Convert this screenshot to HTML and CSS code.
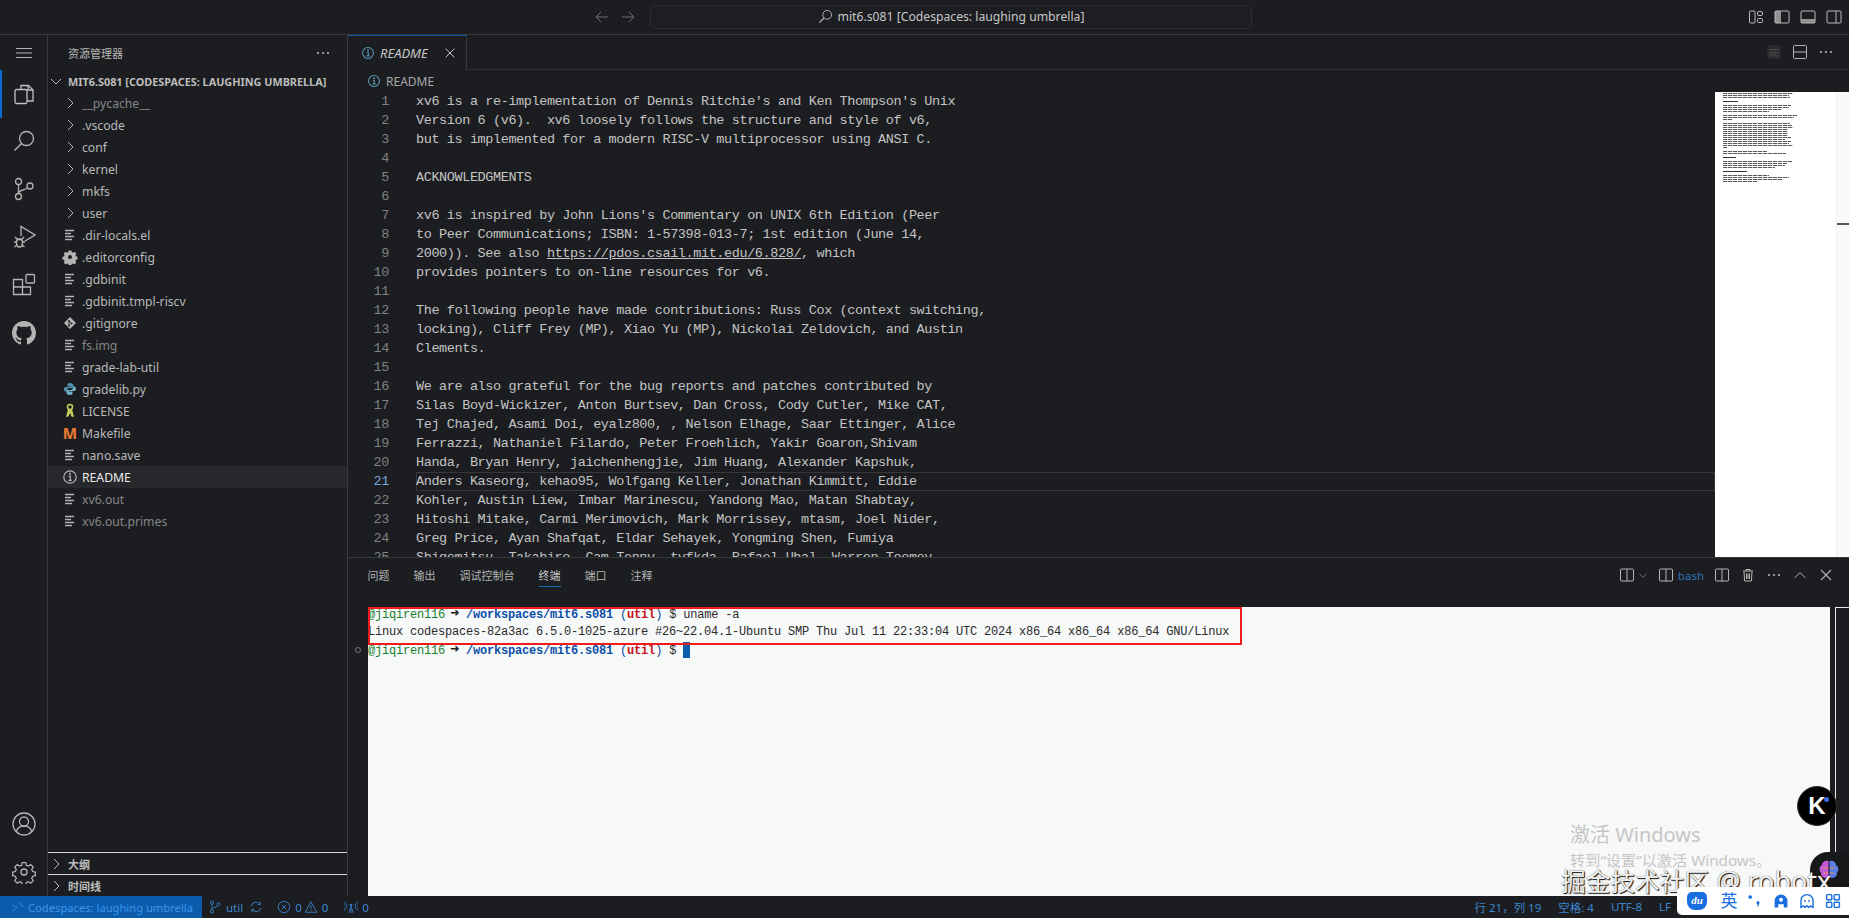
FILE: index.html
```html
<!DOCTYPE html>
<html lang="zh-CN">
<head>
<meta charset="utf-8">
<title>mit6.s081 [Codespaces: laughing umbrella]</title>
<link rel="stylesheet" href="styles.css">
</head>
<body>
<svg class="defs" width="0" height="0" aria-hidden="true">
  <symbol id="chev-r" viewBox="0 0 16 16"><path d="M6 3l5 5-5 5" fill="none" stroke="currentColor" stroke-width="1"/></symbol>
  <symbol id="chev-d" viewBox="0 0 16 16"><path d="M3 6l5 5 5-5" fill="none" stroke="currentColor" stroke-width="1"/></symbol>
  <symbol id="lines" viewBox="0 0 16 16"><path d="M3 3.5h9M3 6.5h6M3 9.5h9M3 12.5h7" fill="none" stroke="currentColor" stroke-width="1.3"/></symbol>
  <symbol id="info" viewBox="0 0 16 16"><circle cx="8" cy="8" r="6.2" fill="none" stroke="currentColor" stroke-width="1.2"/><path d="M6.6 7.2h1.7v4M6.4 11.3h3.4" fill="none" stroke="currentColor" stroke-width="1.2"/><circle cx="8" cy="4.8" r="1" fill="currentColor"/></symbol>
  <symbol id="split" viewBox="0 0 16 16"><rect x="1.5" y="2" width="13" height="12" rx="1" fill="none" stroke="currentColor"/><path d="M8 2v12" stroke="currentColor"/></symbol>
  <symbol id="dots" viewBox="0 0 16 16"><circle cx="3" cy="8" r="1.1" fill="currentColor"/><circle cx="8" cy="8" r="1.1" fill="currentColor"/><circle cx="13" cy="8" r="1.1" fill="currentColor"/></symbol>
  <symbol id="close" viewBox="0 0 16 16"><path d="M3 3l10 10M13 3L3 13" fill="none" stroke="currentColor" stroke-width="1.1"/></symbol>
</svg>

<header class="titlebar">
  <svg class="nav-ico" viewBox="0 0 16 16"><path d="M14 8H2.5M7 3L2 8l5 5" fill="none" stroke="currentColor"/></svg>
  <svg class="nav-ico nav-next" viewBox="0 0 16 16"><path d="M2 8h11.5M9 3l5 5-5 5" fill="none" stroke="currentColor"/></svg>
  <div class="command">
    <svg class="command-ico" viewBox="0 0 16 16"><circle cx="9.8" cy="6.2" r="4.7" fill="none" stroke="currentColor"/><path d="M6.4 9.6L1.5 14.5" stroke="currentColor" stroke-width="1.2"/></svg>
    <span>mit6.s081 [Codespaces: laughing umbrella]</span>
  </div>
  <div class="layout-icons">
    <svg viewBox="0 0 16 16"><rect x="1.5" y="2" width="5.5" height="12" rx="1" fill="none" stroke="currentColor"/><rect x="9.5" y="2.5" width="5" height="4" rx="1.5" fill="none" stroke="currentColor"/><rect x="9.5" y="9.5" width="5" height="4" rx="1.2" fill="none" stroke="currentColor"/></svg>
    <svg viewBox="0 0 16 16"><rect x="1" y="2" width="14" height="12" rx="1" fill="none" stroke="currentColor"/><rect x="1" y="2" width="6" height="12" fill="currentColor" opacity=".75"/></svg>
    <svg viewBox="0 0 16 16"><rect x="1" y="2" width="14" height="12" rx="1" fill="none" stroke="currentColor"/><rect x="1" y="10" width="14" height="4" fill="currentColor" opacity=".75"/></svg>
    <svg viewBox="0 0 16 16"><rect x="1" y="2" width="14" height="12" rx="1" fill="none" stroke="currentColor"/><path d="M10 2v12" stroke="currentColor"/></svg>
  </div>
</header>

<div class="workbench">
  <nav class="activity">
    <svg class="act menu" viewBox="0 0 16 16"><path d="M0 3.5h16M0 8h16M0 12.500h16" fill="none" stroke="currentColor" stroke-width=".9"/></svg>
    <div class="act-active">
      <svg class="act" viewBox="0 0 24 24"><path d="M9 7V3.500h7.500L21 8v11h-6" fill="none" stroke="currentColor" stroke-width="1.300"/><path d="M16 3.500V8h5" fill="none" stroke="currentColor" stroke-width="1.300"/><rect x="3" y="7.500" width="12" height="14" rx="1.500" fill="none" stroke="currentColor" stroke-width="1.300"/></svg>
    </div>
    <svg class="act" viewBox="0 0 24 24"><circle cx="14.500" cy="9.500" r="7" fill="none" stroke="currentColor" stroke-width="1.300"/><path d="M9.500 14.500L2.500 21.500" stroke="currentColor" stroke-width="1.500"/></svg>
    <svg class="act" viewBox="0 0 24 24"><circle cx="6.500" cy="4.500" r="3" fill="none" stroke="currentColor" stroke-width="1.300"/><circle cx="6.500" cy="19.500" r="3" fill="none" stroke="currentColor" stroke-width="1.300"/><circle cx="18" cy="9" r="3" fill="none" stroke="currentColor" stroke-width="1.300"/><path d="M6.500 7.500v9M7 16c0-4 8-2.500 8.500-5.500" fill="none" stroke="currentColor" stroke-width="1.300"/></svg>
    <svg class="act" viewBox="0 0 24 24"><path d="M9 11V1.500L23 10l-10 6" fill="none" stroke="currentColor" stroke-width="1.300"/><path d="M3 12l2.500 2.500h4L12 12M2 17h3M10 17h3M2.500 22l3-2.500M12.500 22l-3-2.500" fill="none" stroke="currentColor" stroke-width="1.300"/><rect x="4.500" y="14" width="6" height="8" rx="3" fill="none" stroke="currentColor" stroke-width="1.300"/></svg>
    <svg class="act" viewBox="0 0 24 24"><path d="M1.500 6.500h9v15h-9zM1.500 14h17v7.500h-8" fill="none" stroke="currentColor" stroke-width="1.300"/><rect x="14" y="1.500" width="8.500" height="8.500" rx="1" fill="none" stroke="currentColor" stroke-width="1.300"/></svg>
    <svg class="act act-gh" viewBox="0 0 16 16"><path fill="currentColor" d="M8 0C3.580 0 0 3.580 0 8c0 3.540 2.290 6.530 5.470 7.590.4.070.55-.17.55-.38 0-.19-.01-.82-.01-1.490-2.010.370-2.530-.49-2.690-.94-.09-.23-.48-.94-.82-1.130-.28-.15-.68-.52-.01-.53.630-.01 1.080.58 1.230.82.720 1.210 1.870.87 2.330.66.070-.52.280-.87.510-1.070-1.780-.2-3.640-.89-3.640-3.950 0-.87.310-1.590.820-2.150-.08-.2-.36-1.020.08-2.120 0 0 .67-.21 2.200.82.640-.18 1.320-.27 2-.27s1.360.09 2 .27c1.530-1.040 2.200-.82 2.200-.82.440 1.100.160 1.920.080 2.120.51.560.82 1.270.82 2.150 0 3.070-1.870 3.750-3.650 3.950.29.25.54.73.54 1.480 0 1.070-.01 1.930-.01 2.200 0 .21.150.46.550.38A8.010 8.010 0 0 0 16 8c0-4.420-3.580-8-8-8z"/></svg>
    <div class="activity-spacer"></div>
    <svg class="act" viewBox="0 0 24 24"><circle cx="12" cy="12" r="11" fill="none" stroke="currentColor" stroke-width="1.300"/><circle cx="12" cy="9.500" r="4.500" fill="none" stroke="currentColor" stroke-width="1.300"/><path d="M4.500 20c.5-4 3.500-6 7.500-6s7 2 7.500 6" fill="none" stroke="currentColor" stroke-width="1.300"/></svg>
    <svg class="act act-gear" viewBox="0 0 24 24"><path d="M10 1.500h4l.6 3 2.300 1 2.600-1.700 2.800 2.800-1.700 2.600 1 2.300 3 .6v4l-3 .6-1 2.300 1.700 2.600-2.800 2.800-2.600-1.700-2.300 1-.6 3h-4l-.6-3-2.300-1-2.600 1.700-2.800-2.800 1.700-2.600-1-2.300-3-.6v-4l3-.6 1-2.300-1.700-2.600 2.800-2.800 2.600 1.700 2.300-1z" transform="translate(1.200 1.200) scale(.9)" fill="none" stroke="currentColor" stroke-width="1.400"/><circle cx="12" cy="12" r="3" fill="none" stroke="currentColor" stroke-width="1.300"/></svg>
  </nav>

  <aside class="sidebar">
    <div class="side-title"><span>资源管理器</span><svg class="ico16" viewBox="0 0 16 16"><use href="#dots"/></svg></div>
    <div class="root-row"><svg class="ico16" viewBox="0 0 16 16"><use href="#chev-d"/></svg><span>MIT6.S081 [CODESPACES: LAUGHING UMBRELLA]</span></div>
    <ul class="tree">
      <li class="row dim"><svg class="ico-row" viewBox="0 0 16 16"><use href="#chev-r"/></svg><span>__pycache__</span></li>
      <li class="row"><svg class="ico-row" viewBox="0 0 16 16"><use href="#chev-r"/></svg><span>.vscode</span></li>
      <li class="row"><svg class="ico-row" viewBox="0 0 16 16"><use href="#chev-r"/></svg><span>conf</span></li>
      <li class="row"><svg class="ico-row" viewBox="0 0 16 16"><use href="#chev-r"/></svg><span>kernel</span></li>
      <li class="row"><svg class="ico-row" viewBox="0 0 16 16"><use href="#chev-r"/></svg><span>mkfs</span></li>
      <li class="row"><svg class="ico-row" viewBox="0 0 16 16"><use href="#chev-r"/></svg><span>user</span></li>
      <li class="row"><svg class="ico-row" viewBox="0 0 16 16"><use href="#lines"/></svg><span>.dir-locals.el</span></li>
      <li class="row"><svg class="ico-row" viewBox="0 0 16 16"><path fill="#b4b4b4" d="M6.500 1.500h3l.4 1.800 1.500.6 1.600-1 2 2.100-1 1.500.6 1.500 1.800.4v3l-1.800.4-.6 1.500 1 1.500-2 2.100-1.600-1-1.500.6-.4 1.800h-3l-.4-1.800-1.500-.6-1.600 1-2-2.100 1-1.500-.6-1.500-1.800-.4v-3l1.800-.4.6-1.500-1-1.500 2-2.100 1.600 1 1.500-.6z" transform="translate(.8 .2) scale(.9)"/><circle cx="8" cy="8" r="2" fill="#1b1d20"/></svg><span>.editorconfig</span></li>
      <li class="row"><svg class="ico-row" viewBox="0 0 16 16"><use href="#lines"/></svg><span>.gdbinit</span></li>
      <li class="row"><svg class="ico-row" viewBox="0 0 16 16"><use href="#lines"/></svg><span>.gdbinit.tmpl-riscv</span></li>
      <li class="row"><svg class="ico-row" viewBox="0 0 16 16"><path fill="#b4b4b4" d="M8 2l6 6-6 6-6-6z"/><circle cx="7" cy="6" r="1" fill="#1b1d20"/><circle cx="9.500" cy="8.500" r="1" fill="#1b1d20"/><circle cx="7" cy="10.500" r="1" fill="#1b1d20"/><path d="M7 6v4.500M7 6l2.500 2.500" stroke="#1b1d20" stroke-width=".8"/></svg><span>.gitignore</span></li>
      <li class="row dim"><svg class="ico-row" viewBox="0 0 16 16"><use href="#lines"/></svg><span>fs.img</span></li>
      <li class="row"><svg class="ico-row" viewBox="0 0 16 16"><use href="#lines"/></svg><span>grade-lab-util</span></li>
      <li class="row"><svg class="ico-row" viewBox="0 0 16 16"><path fill="#4f93b0" d="M8 2C5.500 2 5.500 3 5.500 4v1.500H9V6H3.800C2.500 6 2 7 2 8.200 2 9.500 2.500 10.500 3.800 10.500H5V9.200C5 8 6 7 7.200 7h3C11 7 11.500 6.500 11.500 5.700V4C11.500 3 10.500 2 8 2z"/><path fill="#6fb0c8" d="M8 14c2.500 0 2.500-1 2.500-2v-1.500H7V10h5.200C13.500 10 14 9 14 7.800 14 6.500 13.500 5.500 12.200 5.500H11v1.300C11 8 10 9 8.800 9h-3C5 9 4.500 9.500 4.500 10.300V12c0 1 1 2 3.500 2z"/></svg><span>gradelib.py</span></li>
      <li class="row"><svg class="ico-row" viewBox="0 0 16 16"><circle cx="8" cy="4" r="2.500" fill="none" stroke="#c3cf5a" stroke-width="1.500"/><path d="M6 6h4l2 8-2.500-.5L8 10l-1.500 3.500L4 14z" fill="#c3cf5a"/></svg><span>LICENSE</span></li>
      <li class="row"><b class="m-ico">M</b><span>Makefile</span></li>
      <li class="row"><svg class="ico-row" viewBox="0 0 16 16"><use href="#lines"/></svg><span>nano.save</span></li>
      <li class="row selected"><svg class="ico-row ico-info" viewBox="0 0 16 16"><use href="#info"/></svg><span>README</span></li>
      <li class="row dim"><svg class="ico-row" viewBox="0 0 16 16"><use href="#lines"/></svg><span>xv6.out</span></li>
      <li class="row dim"><svg class="ico-row" viewBox="0 0 16 16"><use href="#lines"/></svg><span>xv6.out.primes</span></li>
    </ul>
    <div class="side-section"><svg class="ico16" viewBox="0 0 16 16"><use href="#chev-r"/></svg><span>大纲</span></div>
    <div class="side-section"><svg class="ico16" viewBox="0 0 16 16"><use href="#chev-r"/></svg><span>时间线</span></div>
  </aside>

  <main class="content">
    <section class="editor">
      <div class="tabs">
        <div class="tab"><svg class="ico14 ico-info" viewBox="0 0 16 16"><use href="#info"/></svg><i>README</i><svg class="ico16 tab-x" viewBox="0 0 16 16"><use href="#close"/></svg></div>
        <div class="tabs-fill">
          <svg class="ico18 faded" viewBox="0 0 16 16"><rect x="1" y="1" width="14" height="14" fill="#2a2c2f"/><path d="M2.500 5.500h11M8 5.500v2M4 8h3v4H4zM9 8h3v4H9z" fill="none" stroke="#555" /></svg>
          <svg class="ico16" viewBox="0 0 16 16"><rect x="1.500" y="1.500" width="13" height="13" rx="1" fill="none" stroke="currentColor"/><path d="M1.500 8h13" stroke="currentColor"/></svg>
          <svg class="ico16" viewBox="0 0 16 16"><use href="#dots"/></svg>
        </div>
      </div>
      <div class="crumbs"><svg class="ico14 ico-info" viewBox="0 0 16 16"><use href="#info"/></svg><span>README</span></div>
      <div class="editor-body">
        <div class="code">
          <div class="line"><span class="ln">1</span><span class="tx">xv6 is a re-implementation of Dennis Ritchie's and Ken Thompson's Unix</span></div>
          <div class="line"><span class="ln">2</span><span class="tx">Version 6 (v6).  xv6 loosely follows the structure and style of v6,</span></div>
          <div class="line"><span class="ln">3</span><span class="tx">but is implemented for a modern RISC-V multiprocessor using ANSI C.</span></div>
          <div class="line"><span class="ln">4</span><span class="tx"></span></div>
          <div class="line"><span class="ln">5</span><span class="tx">ACKNOWLEDGMENTS</span></div>
          <div class="line"><span class="ln">6</span><span class="tx"></span></div>
          <div class="line"><span class="ln">7</span><span class="tx">xv6 is inspired by John Lions's Commentary on UNIX 6th Edition (Peer</span></div>
          <div class="line"><span class="ln">8</span><span class="tx">to Peer Communications; ISBN: 1-57398-013-7; 1st edition (June 14,</span></div>
          <div class="line"><span class="ln">9</span><span class="tx">2000)). See also <u>https://pdos.csail.mit.edu/6.828/</u>, which</span></div>
          <div class="line"><span class="ln">10</span><span class="tx">provides pointers to on-line resources for v6.</span></div>
          <div class="line"><span class="ln">11</span><span class="tx"></span></div>
          <div class="line"><span class="ln">12</span><span class="tx">The following people have made contributions: Russ Cox (context switching,</span></div>
          <div class="line"><span class="ln">13</span><span class="tx">locking), Cliff Frey (MP), Xiao Yu (MP), Nickolai Zeldovich, and Austin</span></div>
          <div class="line"><span class="ln">14</span><span class="tx">Clements.</span></div>
          <div class="line"><span class="ln">15</span><span class="tx"></span></div>
          <div class="line"><span class="ln">16</span><span class="tx">We are also grateful for the bug reports and patches contributed by</span></div>
          <div class="line"><span class="ln">17</span><span class="tx">Silas Boyd-Wickizer, Anton Burtsev, Dan Cross, Cody Cutler, Mike CAT,</span></div>
          <div class="line"><span class="ln">18</span><span class="tx">Tej Chajed, Asami Doi, eyalz800, , Nelson Elhage, Saar Ettinger, Alice</span></div>
          <div class="line"><span class="ln">19</span><span class="tx">Ferrazzi, Nathaniel Filardo, Peter Froehlich, Yakir Goaron,Shivam</span></div>
          <div class="line"><span class="ln">20</span><span class="tx">Handa, Bryan Henry, jaichenhengjie, Jim Huang, Alexander Kapshuk,</span></div>
          <div class="line current"><span class="ln">21</span><span class="tx">Anders Kaseorg, kehao95, Wolfgang Keller, Jonathan Kimmitt, Eddie</span></div>
          <div class="line"><span class="ln">22</span><span class="tx">Kohler, Austin Liew, Imbar Marinescu, Yandong Mao, Matan Shabtay,</span></div>
          <div class="line"><span class="ln">23</span><span class="tx">Hitoshi Mitake, Carmi Merimovich, Mark Morrissey, mtasm, Joel Nider,</span></div>
          <div class="line"><span class="ln">24</span><span class="tx">Greg Price, Ayan Shafqat, Eldar Sehayek, Yongming Shen, Fumiya</span></div>
          <div class="line"><span class="ln">25</span><span class="tx">Shigemitsu, Takahiro, Cam Tenny, tyfkda, Rafael Ubal, Warren Toomey,</span></div>
        </div>
        <div class="minimap">
          <div class="mm" style="width:70px"></div><div class="mm" style="width:66px"></div><div class="mm" style="width:67px"></div><div class="mm" style="width:0"></div>
          <div class="mm mm-b" style="width:15px"></div><div class="mm" style="width:0"></div>
          <div class="mm" style="width:68px"></div><div class="mm" style="width:66px"></div><div class="mm" style="width:58px"></div><div class="mm" style="width:46px"></div><div class="mm" style="width:0"></div>
          <div class="mm" style="width:74px"></div><div class="mm" style="width:71px"></div><div class="mm" style="width:9px"></div><div class="mm" style="width:0"></div>
          <div class="mm" style="width:67px"></div><div class="mm" style="width:69px"></div><div class="mm" style="width:70px"></div><div class="mm" style="width:65px"></div><div class="mm" style="width:65px"></div><div class="mm" style="width:65px"></div><div class="mm" style="width:65px"></div><div class="mm" style="width:68px"></div><div class="mm" style="width:62px"></div><div class="mm" style="width:68px"></div><div class="mm" style="width:66px"></div><div class="mm" style="width:70px"></div><div class="mm" style="width:4px"></div><div class="mm" style="width:0"></div>
          <div class="mm" style="width:44px"></div><div class="mm" style="width:63px"></div><div class="mm" style="width:0"></div>
          <div class="mm mm-b" style="width:13px"></div><div class="mm" style="width:0"></div>
          <div class="mm" style="width:69px"></div><div class="mm" style="width:64px"></div><div class="mm" style="width:62px"></div><div class="mm" style="width:52px"></div><div class="mm" style="width:0"></div>
          <div class="mm mm-b" style="width:24px"></div><div class="mm" style="width:0"></div>
          <div class="mm" style="width:46px"></div><div class="mm" style="width:66px"></div><div class="mm" style="width:60px"></div><div class="mm" style="width:35px"></div>
        </div>
        <div class="scroll"><div class="scroll-mark"></div></div>
      </div>
    </section>

    <section class="panel">
      <div class="panel-head">
        <span class="ptab">问题</span><span class="ptab">输出</span><span class="ptab">调试控制台</span><span class="ptab ptab-on">终端</span><span class="ptab">端口</span><span class="ptab">注释</span>
        <div class="panel-actions">
          <svg class="ico16" viewBox="0 0 16 16"><use href="#split"/></svg>
          <svg class="ico12 chev-small" viewBox="0 0 16 16"><use href="#chev-d"/></svg>
          <svg class="ico16 bash-ico" viewBox="0 0 16 16"><use href="#split"/></svg>
          <span class="bash">bash</span>
          <svg class="ico16" viewBox="0 0 16 16"><use href="#split"/></svg>
          <svg class="ico16" viewBox="0 0 16 16"><path d="M3 4h10M6 4V2.500h4V4M4 4.500l.6 9.500h6.800l.6-9.500M6.500 6.500v5.500M8 6.500v5.500M9.500 6.500v5.500" fill="none" stroke="currentColor"/></svg>
          <svg class="ico16" viewBox="0 0 16 16"><use href="#dots"/></svg>
          <svg class="ico16" viewBox="0 0 16 16"><path d="M2.500 11L8 5.500l5.500 5.500" fill="none" stroke="currentColor"/></svg>
          <svg class="ico16" viewBox="0 0 16 16"><use href="#close"/></svg>
        </div>
      </div>
      <div class="term-wrap">
        <div class="term-gutter"><span class="term-dot"></span></div>
        <div class="terminal">
          <div class="tline"><span class="g">@jiqiren116</span> <b class="arrow">➜</b> <span class="p">/workspaces/mit6.s081</span> <span class="b">(</span><span class="r">util</span><span class="b">)</span> $ uname -a</div>
          <div class="tline">Linux codespaces-82a3ac 6.5.0-1025-azure #26~22.04.1-Ubuntu SMP Thu Jul 11 22:33:04 UTC 2024 x86_64 x86_64 x86_64 GNU/Linux</div>
          <div class="tline"><span class="g">@jiqiren116</span> <b class="arrow">➜</b> <span class="p">/workspaces/mit6.s081</span> <span class="b">(</span><span class="r">util</span><span class="b">)</span> $ <span class="cursor"></span></div>
          <div class="redbox"></div>
          <div class="activate"><p class="a1">激活 Windows</p><p class="a2">转到“设置”以激活 Windows。</p></div>
        </div>
        <div class="term-side"></div>
      </div>
    </section>
  </main>
</div>

<footer class="status">
  <div class="remote"><svg class="ico14" viewBox="0 0 16 16"><path d="M2 13l6-6M2 5l3 3M9 3l5 5" fill="none" stroke="currentColor"/></svg><span>Codespaces: laughing umbrella</span></div>
  <div class="st branch"><svg class="ico14" viewBox="0 0 16 16"><circle cx="4.500" cy="3" r="1.800" fill="none" stroke="currentColor"/><circle cx="4.500" cy="13" r="1.800" fill="none" stroke="currentColor"/><circle cx="12" cy="5" r="1.800" fill="none" stroke="currentColor"/><path d="M4.500 5v6M5 10c1-2 5-1 6-3.500" fill="none" stroke="currentColor"/></svg><span>util</span><svg class="ico14 sync" viewBox="0 0 16 16"><path d="M2.500 7a5.500 5.500 0 0 1 10-2M13.500 9a5.500 5.500 0 0 1-10 2M12.800 2v3.200H9.800M3.200 14v-3.200h3" fill="none" stroke="currentColor"/></svg></div>
  <div class="st problems"><svg class="ico14" viewBox="0 0 16 16"><circle cx="8" cy="8" r="6.500" fill="none" stroke="currentColor"/><path d="M5.500 5.500l5 5M10.500 5.500l-5 5" stroke="currentColor"/></svg><span>0</span><svg class="ico14 warn" viewBox="0 0 16 16"><path d="M8 2l6.500 12h-13zM8 6v4M8 11v1.500" fill="none" stroke="currentColor"/></svg><span>0</span></div>
  <div class="st ports"><svg class="ico14" viewBox="0 0 16 16"><path d="M8 8v7M5 15l3-7 3 7M3.500 10a5 5 0 0 1 0-6M12.500 10a5 5 0 0 0 0-6M1.500 12a8 8 0 0 1 0-10M14.500 12a8 8 0 0 0 0-10" fill="none" stroke="currentColor"/><circle cx="8" cy="6" r="1.500" fill="currentColor"/></svg><span>0</span></div>
  <div class="st-right"><span>行 21，列 19</span><span>空格: 4</span><span>UTF-8</span><span>LF</span></div>
</footer>

<div class="k-badge"><b>K</b><i></i></div>
<div class="brain-badge"><svg viewBox="0 0 24 24"><path d="M11.500 3C8 2 5 4 5 7 2 8.500 2 13 4 14.500 3.500 18 7 21 11.500 20z" fill="#c45ad8"/><path d="M12.500 3C16 2 19 4 19 7c3 1.500 3 6 1 7.500.5 3.500-3 6.500-7.500 5.500z" fill="#5a7ce8"/><path d="M6 10h5M13 10h5M7 15h4M13 15h4" stroke="#f0904a" stroke-width="1.200"/></svg></div>
<div class="watermark">掘金技术社区<span class="wm-lat"> @ robotx</span></div>
<div class="ime">
  <span class="ime-du">du</span>
  <span class="ime-en">英</span>
  <svg class="ime-ico" viewBox="0 0 20 20"><circle cx="4" cy="5" r="2.300" fill="currentColor"/><path d="M13 10a2.600 2.600 0 0 1 2.500 3c-.2 2-1.500 3.500-3.500 4 1-1.200 1.200-2 1-2.800A2.600 2.600 0 0 1 13 10z" fill="currentColor"/></svg>
  <svg class="ime-ico" viewBox="0 0 20 20"><path d="M2 18V10a8 8 0 0 1 16 0v8h-4.500v-4h-7v4z" fill="currentColor"/><circle cx="10" cy="8.500" r="2.500" fill="#fff"/></svg>
  <svg class="ime-ico" viewBox="0 0 20 20"><path d="M2.500 18V9.500a7.500 7.500 0 0 1 15 0V18l-3.200-2-2 2-2.300-2-2.300 2-2-2z" fill="none" stroke="currentColor" stroke-width="1.800"/><circle cx="7.500" cy="10" r="1.200" fill="currentColor"/><circle cx="12.500" cy="10" r="1.200" fill="currentColor"/></svg>
  <svg class="ime-ico" viewBox="0 0 20 20"><g fill="none" stroke="currentColor" stroke-width="1.800"><rect x="2" y="2" width="6.500" height="6.500" rx="1"/><rect x="11.500" y="2" width="6.500" height="6.500" rx="1"/><rect x="2" y="11.500" width="6.500" height="6.500" rx="1"/><rect x="11.500" y="11.500" width="6.500" height="6.500" rx="1"/></g></svg>
</div>
</body>
</html>
```

FILE: styles.css
```css
* { box-sizing: border-box; }
html, body { margin: 0; height: 100%; }
body {
  width: 1849px;
  height: 918px;
  overflow: hidden;
  display: flex;
  flex-direction: column;
  position: relative;
  background: #1b1d20;
  color: #c4c4c4;
  font-family: "Noto Sans", "Noto Sans CJK SC", sans-serif;
  font-size: 12.2px;
}
.defs { position: absolute; }
svg { display: block; flex: none; }
.ico12 { width: 12px; height: 12px; }
.ico14 { width: 14px; height: 14px; }
.ico16 { width: 16px; height: 16px; }
.ico18 { width: 16px; height: 16px; }
.faded { opacity: .8; }
.ico-info { color: #5b9ab5; }

/* title bar */
.titlebar {
  height: 35px;
  flex: none;
  display: flex;
  align-items: center;
  padding: 0 7px 1px 594px;
  border-bottom: 1px solid #383a3d;
}
.nav-ico { width: 16px; height: 16px; color: #6e7073; margin-right: 10px; }
.nav-next { margin-right: 14px; }
.command {
  width: 602px;
  height: 24px;
  border: 1px solid #2c2e31;
  border-radius: 6px;
  background: #1c1e21;
  display: flex;
  align-items: center;
  justify-content: center;
  gap: 5px;
  font-size: 12.2px;
  color: #c8c8c8;
}
.command-ico { width: 15px; height: 15px; color: #b8b8b8; }
.layout-icons { margin-left: auto; display: flex; gap: 10px; color: #b9b9b9; }
.layout-icons svg { width: 16px; height: 16px; }

/* workbench */
.workbench { flex: 1; min-height: 0; display: flex; }
.activity {
  width: 48px;
  flex: none;
  display: flex;
  flex-direction: column;
  align-items: center;
  color: #b4b4b4;
  padding: 10px 0 12px;
  border-right: 1px solid #383a3d;
}
.act { width: 24px; height: 24px; margin-bottom: 24px; }
.menu { width: 16px; height: 16px; margin-bottom: 9px; color: #c4c4c4; }
.act-active {
  width: 47px;
  height: 48px;
  display: flex;
  justify-content: center;
  align-items: center;
  border-left: 2px solid #0a6ad0;
  padding-right: 2px;
  margin-bottom: 11px;
  color: #c0c0c0;
}
.act-active .act { margin: 0; }
.act-gh { margin-bottom: 0; }
.act-gear { margin-bottom: 0; }
.activity-spacer { flex: 1; }

/* side bar */
.sidebar {
  width: 300px;
  flex: none;
  display: flex;
  flex-direction: column;
  border-right: 1px solid #383a3d;
}
.side-title {
  height: 35px;
  flex: none;
  display: flex;
  align-items: center;
  justify-content: space-between;
  padding: 0 16px 0 20px;
  font-size: 11px;
  color: #b8b8b8;
}
.root-row {
  height: 22px;
  flex: none;
  display: flex;
  align-items: center;
  gap: 4px;
  font-size: 10.85px;
  font-weight: 700;
  color: #bdbdbd;
  white-space: nowrap;
}
.tree { list-style: none; margin: 0; padding: 0; flex: 1; }
.row { height: 22px; display: flex; align-items: center; padding-left: 14px; gap: 4px; color: #b9b9b9; }
.ico-row { width: 16px; height: 16px; color: #b4b4b4; }
.dim { color: #868686; }
.selected { background: #26282b; color: #ececec; }
.m-ico { width: 16px; text-align: center; font-size: 15px; font-weight: 800; color: #e37933; line-height: 16px; }
.side-section {
  height: 22px;
  flex: none;
  display: flex;
  align-items: center;
  gap: 4px;
  border-top: 1px solid #d8d8d8;
  font-size: 11px;
  font-weight: 700;
  color: #bdbdbd;
}

/* editor */
.content { flex: 1; min-width: 0; display: flex; flex-direction: column; }
.editor { height: 522px; flex: none; display: flex; flex-direction: column; overflow: hidden; }
.tabs { height: 35px; flex: none; display: flex; }
.tab {
  width: 119px;
  display: flex;
  align-items: center;
  gap: 5px;
  padding-left: 13px;
  border-top: 1px solid #0e5a9e;
  border-right: 1px solid #383a3d;
  color: #c8c8c8;
  font-size: 13px;
}
.tab-x { margin-left: 10px; width: 14px; height: 14px; }
.tabs-fill {
  flex: 1;
  display: flex;
  align-items: center;
  justify-content: flex-end;
  gap: 10px;
  padding-right: 15px;
  border-bottom: 1px solid #2e3033;
  color: #b4b4b4;
}
.crumbs {
  height: 22px;
  flex: none;
  display: flex;
  align-items: center;
  gap: 5px;
  padding-left: 19px;
  font-size: 12px;
  color: #a8a8a8;
}
.editor-body { flex: 1; min-height: 0; display: flex; }
.code {
  flex: 1;
  min-width: 0;
  font-family: "Liberation Mono", monospace;
  font-size: 13.500px;
  letter-spacing: -.4px;
  color: #c4c4c4;
}
.line { height: 19px; line-height: 19px; display: flex; white-space: pre; }
.ln { width: 41px; flex: none; text-align: right; color: #7f8184; }
.tx { flex: 1; margin-left: 27px; }
.current .ln { color: #7aa6dc; }
.current .tx { box-shadow: inset 0 0 0 1px #35373a; }
.minimap { width: 121px; flex: none; background: #fff; }
.mm {
  height: 2px;
  margin-left: 8px;
  border-top: 1px solid transparent;
  background: repeating-linear-gradient(90deg, #5a5a5a 0 4px, #c8c8c8 4px 5px) content-box;
}
.mm-b { background: #333 content-box; }
.scroll { width: 13px; flex: none; background: #fafafa; border-left: 1px solid #eee; padding-top: 131px; }
.scroll-mark { height: 2px; background: #555; }

/* panel */
.panel { flex: 1; min-height: 0; display: flex; flex-direction: column; border-top: 1px solid #38393c; }
.panel-head {
  height: 49px;
  flex: none;
  display: flex;
  align-items: flex-start;
  padding-left: 19.5px;
  font-size: 11px;
  color: #b4b4b4;
}
.ptab { margin-right: 24px; height: 29px; line-height: 36px; white-space: nowrap; }
.ptab-on { color: #c8c8c8; border-bottom: 1px solid #1f6fb8; }
.panel-actions {
  margin-left: auto;
  display: flex;
  align-items: center;
  gap: 10px;
  height: 34px;
  padding-right: 15px;
  color: #b4b4b4;
}
.chev-small { margin-left: -8px; color: #888; }
.bash-ico { margin-left: -1px; margin-right: -6px; }
.bash { color: #2f6fb8; font-size: 11.5px; }
.term-wrap { flex: 1; min-height: 0; display: flex; }
.term-gutter { width: 20px; flex: none; position: relative; }
.term-dot {
  position: absolute;
  left: 7px;
  top: 40px;
  width: 6px;
  height: 6px;
  border: 1px solid #777;
  border-radius: 50%;
}
.terminal {
  width: 1462px;
  flex: none;
  background: #f7f8f8;
  position: relative;
  overflow: hidden;
  font-family: "Liberation Mono", monospace;
  font-size: 12px;
  letter-spacing: -.2px;
  color: #2a2a2a;
  padding-left: 0;
}
.tline { height: 17.300px; line-height: 17.300px; white-space: pre; }
.g { color: #17802c; }
.p { color: #0b4fa8; font-weight: 700; }
.b { color: #0b4fa8; }
.r { color: #c4151c; font-weight: 700; }
.arrow {
  display: inline-block;
  width: 7px;
  font-size: 15px;
  line-height: 12px;
  text-align: center;
  text-indent: -2px;
  letter-spacing: 0;
  color: #222;
}
.cursor { display: inline-block; width: 7px; height: 16px; background: #0a5cad; vertical-align: -4px; }
.redbox {
  position: absolute;
  left: 0;
  top: 0;
  width: 874px;
  height: 38px;
  border: 2px solid #ee1c1c;
}
.activate { position: absolute; left: 1202px; top: 214px; color: #c6c6c6; white-space: nowrap; font-family: "Noto Sans", "Noto Sans CJK SC", sans-serif; letter-spacing: 0; }
.a1 { margin: 0 0 3px; font-size: 20px; line-height: 28px; }
.a2 { margin: 0; font-size: 15.2px; line-height: 16px; }
.term-side {
  flex: 1;
  margin-left: 5px;
  border-left: 1px solid #e8e8e8;
  border-top: 1px solid #e8e8e8;
}

/* status bar */
.status {
  height: 22px;
  flex: none;
  display: flex;
  align-items: center;
  font-size: 11.5px;
  color: #3d86d0;
  padding-right: 178px;
  background: #1b1d20;
}
.remote {
  width: 202px;
  flex: none;
  height: 22px;
  background: #0b5cad;
  display: flex;
  align-items: center;
  gap: 3px;
  padding-left: 11px;
  color: #3f94ea;
  font-size: 11.2px;
  white-space: nowrap;
}
.st { display: flex; align-items: center; gap: 4px; }
.branch { margin-left: 6px; }
.sync { margin-left: 2px; }
.problems { margin-left: 14px; }
.warn { margin-left: -2px; }
.ports { margin-left: 16px; }
.st-right { margin-left: auto; display: flex; gap: 17px; }

/* overlays */
.k-badge {
  position: absolute;
  left: 1797px;
  top: 786px;
  width: 40px;
  height: 40px;
  border-radius: 50%;
  background: #000;
  border: 1px solid #333;
  display: flex;
  align-items: center;
  justify-content: center;
}
.k-badge b { color: #fff; font-size: 24px; font-family: "Liberation Sans", sans-serif; font-weight: 700; margin-top: -1px; }
.k-badge i { position: absolute; left: 26px; top: 10px; width: 5px; height: 5px; border-radius: 50%; background: #3a6cf0; }
.brain-badge {
  position: absolute;
  left: 1810px;
  top: 852px;
  width: 39px;
  height: 36px;
  background: #16181a;
  border-radius: 18px 0 0 0;
  display: flex;
  align-items: center;
  justify-content: center;
  padding-right: 2px;
}
.brain-badge svg { width: 24px; height: 24px; }
.watermark {
  position: absolute;
  left: 1561px;
  top: 868px;
  font-size: 24.7px;
  line-height: 26px;
  white-space: nowrap;
  color: #f2f2f2;
  font-family: "Noto Sans", "Noto Sans CJK SC", sans-serif;
  text-shadow: 1px 1px 1px #111, 0 0 1px #555;
}
.wm-lat { font-size: 27px; }
.ime {
  position: absolute;
  left: 1677px;
  top: 887px;
  width: 172px;
  height: 28px;
  background: #fff;
  border-radius: 5px 0 0 5px;
  display: flex;
  align-items: center;
  padding-left: 10px;
  color: #1a6fe0;
}
.ime-du {
  width: 20px;
  height: 18px;
  background: #1a6fe0;
  color: #fff;
  border-radius: 5px 5px 8px 8px;
  font: italic 700 11px/17px "Liberation Serif", serif;
  text-align: center;
}
.ime-en { margin: 0 -2px 0 12px; width: 20px; font-size: 17px; line-height: 20px; text-align: center; }
.ime-ico { width: 16px; height: 16px; margin-left: 10px; }
```
